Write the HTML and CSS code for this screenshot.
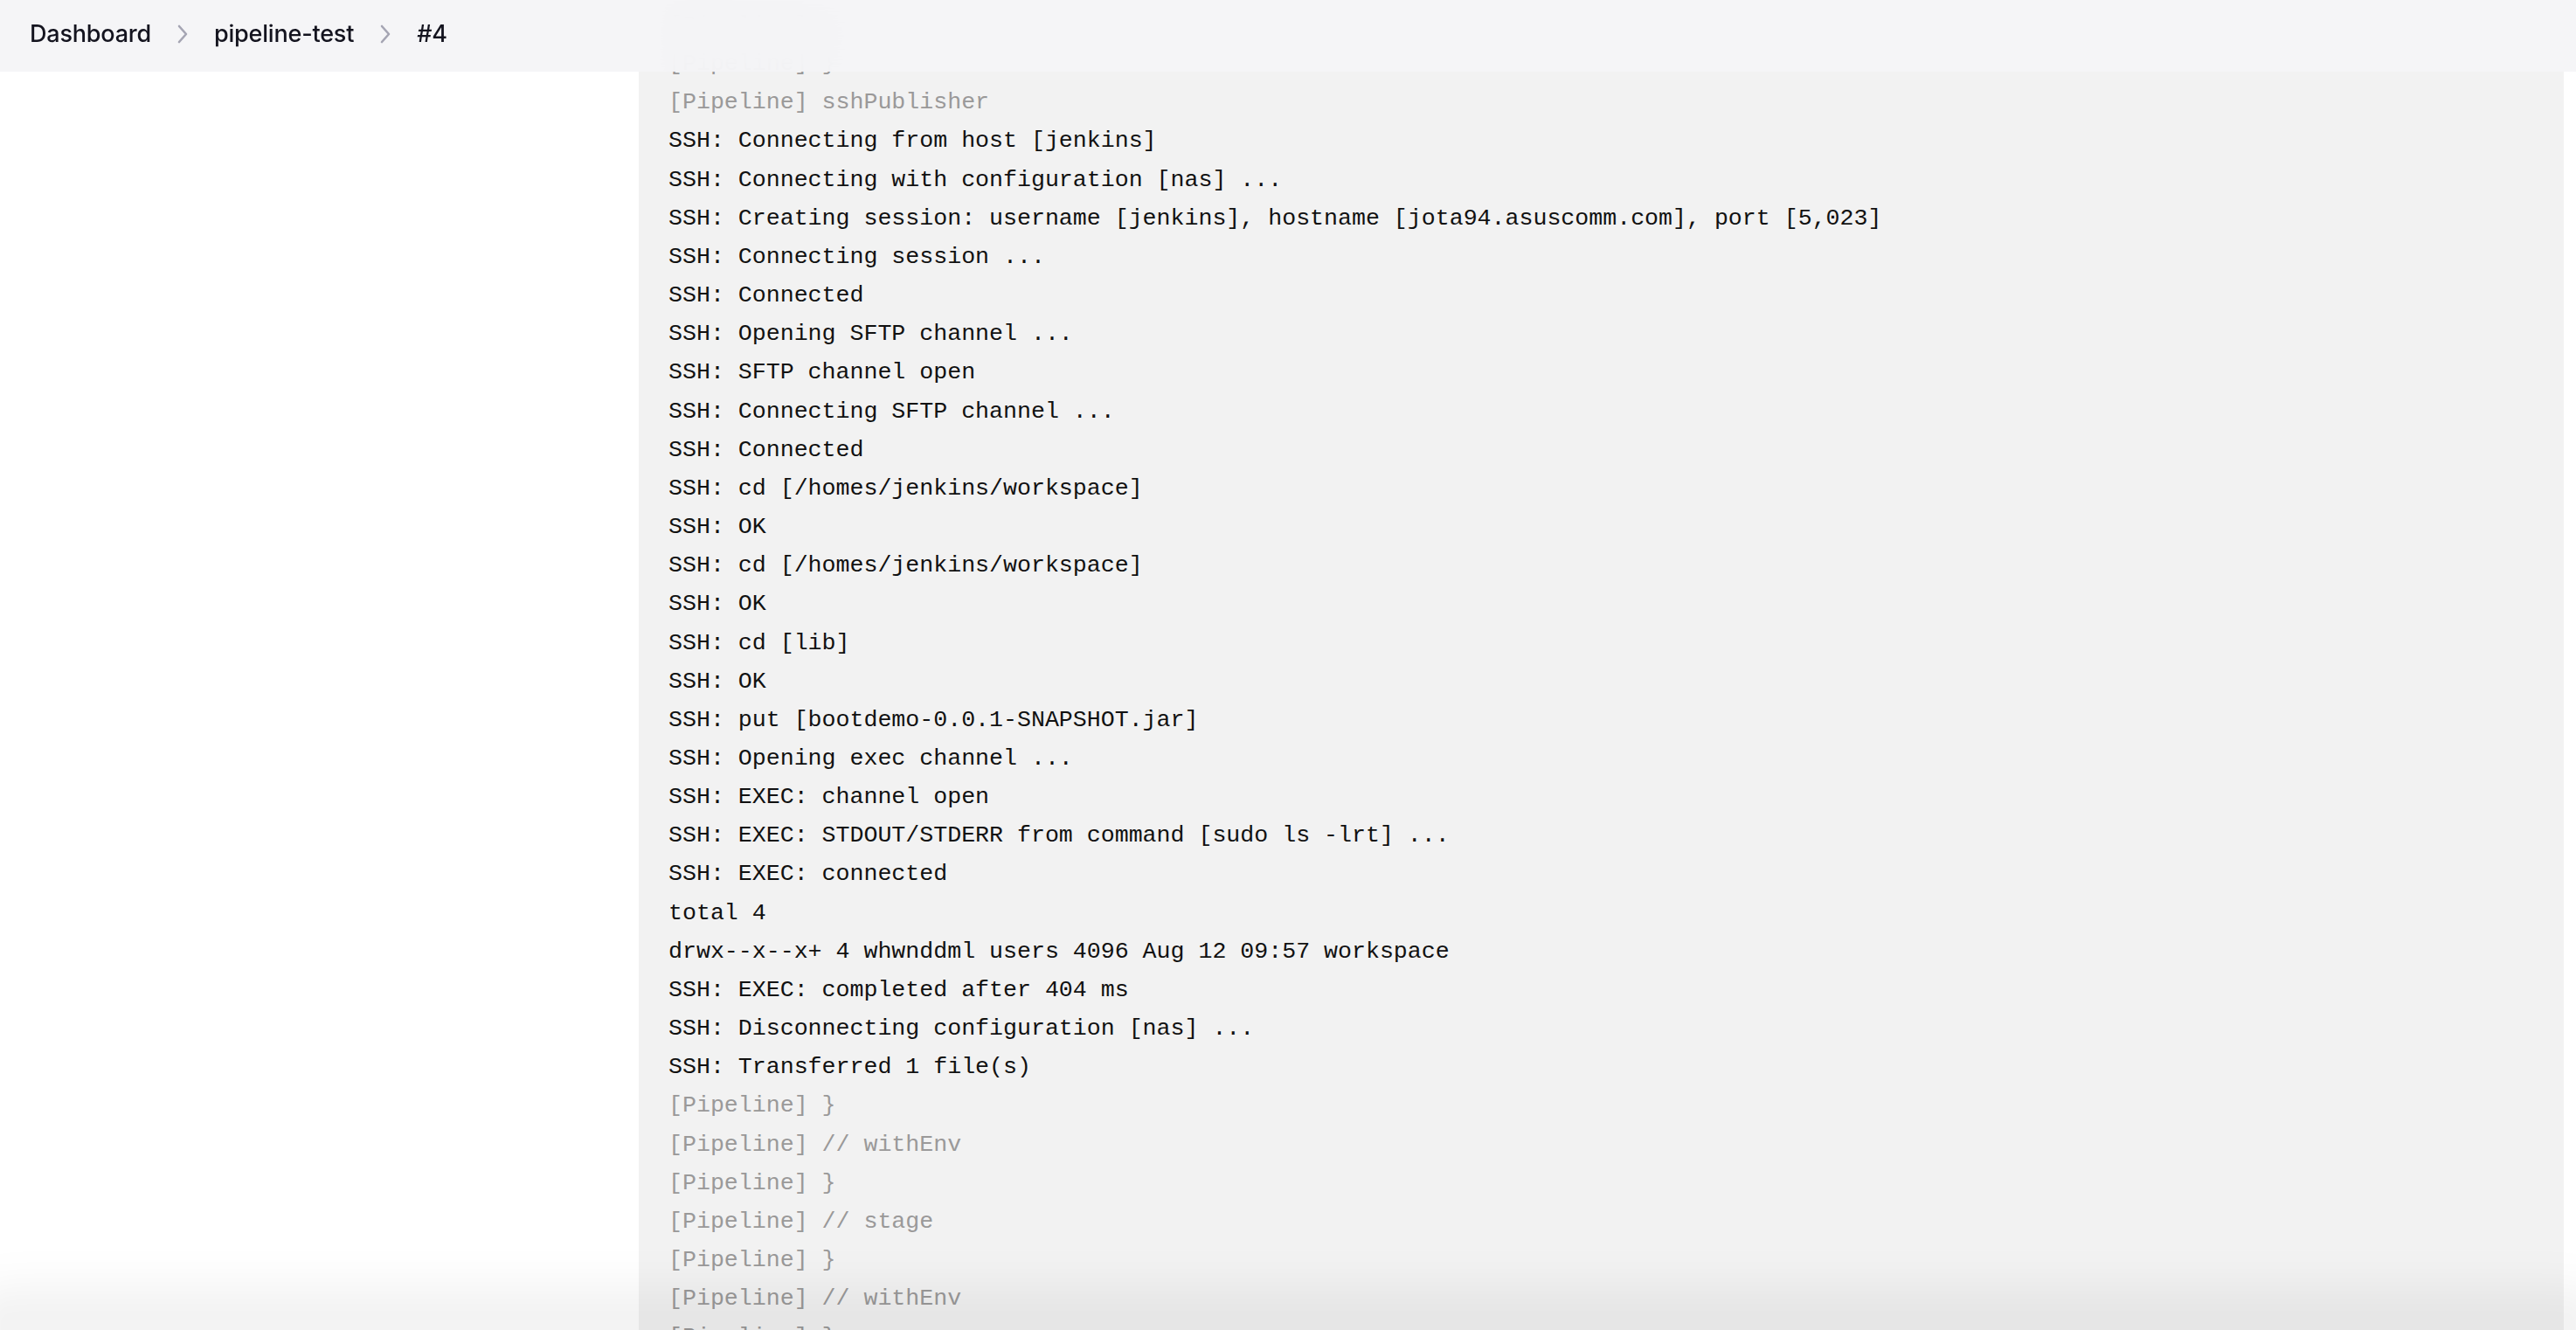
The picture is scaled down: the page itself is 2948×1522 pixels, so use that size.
FILE: index.html
```html
<!DOCTYPE html>
<html lang="en">
<head>
<meta charset="utf-8">
<title>pipeline-test #4 Console</title>
<link rel="stylesheet" href="styles.css">
</head>
<body>
<header class="page-header">
  <nav class="breadcrumbs">
    <a class="crumb" href="#">Dashboard</a>
    <svg class="chevron" viewBox="0 0 12 22" width="12" height="22"><path d="M2 2 L10 11 L2 20" fill="none" stroke="#a5a5b3" stroke-width="2.6" stroke-linecap="round" stroke-linejoin="round"/></svg>
    <a class="crumb" href="#">pipeline-test</a>
    <svg class="chevron" viewBox="0 0 12 22" width="12" height="22"><path d="M2 2 L10 11 L2 20" fill="none" stroke="#a5a5b3" stroke-width="2.6" stroke-linecap="round" stroke-linejoin="round"/></svg>
    <a class="crumb" href="#">#4</a>
  </nav>
</header>
<div class="page">
  <aside class="sidebar"></aside>
  <main class="console">
<pre class="console-output"><span class="pl">[Pipeline] {</span>
<span class="pl">[Pipeline] }</span>
<span class="pl">[Pipeline] sshPublisher</span>
SSH: Connecting from host [jenkins]
SSH: Connecting with configuration [nas] ...
SSH: Creating session: username [jenkins], hostname [jota94.asuscomm.com], port [5,023]
SSH: Connecting session ...
SSH: Connected
SSH: Opening SFTP channel ...
SSH: SFTP channel open
SSH: Connecting SFTP channel ...
SSH: Connected
SSH: cd [/homes/jenkins/workspace]
SSH: OK
SSH: cd [/homes/jenkins/workspace]
SSH: OK
SSH: cd [lib]
SSH: OK
SSH: put [bootdemo-0.0.1-SNAPSHOT.jar]
SSH: Opening exec channel ...
SSH: EXEC: channel open
SSH: EXEC: STDOUT/STDERR from command [sudo ls -lrt] ...
SSH: EXEC: connected
total 4
drwx--x--x+ 4 whwnddml users 4096 Aug 12 09:57 workspace
SSH: EXEC: completed after 404 ms
SSH: Disconnecting configuration [nas] ...
SSH: Transferred 1 file(s)
<span class="pl">[Pipeline] }</span>
<span class="pl">[Pipeline] // withEnv</span>
<span class="pl">[Pipeline] }</span>
<span class="pl">[Pipeline] // stage</span>
<span class="pl">[Pipeline] }</span>
<span class="pl">[Pipeline] // withEnv</span>
<span class="pl">[Pipeline] }</span>
</pre>
  </main>
</div>
<div class="bottom-fade"></div>
</body>
</html>
```

FILE: styles.css
```css
html, body {
  margin: 0;
  padding: 0;
  height: 1522px;
  overflow: hidden;
  background: #ffffff;
}

body {
  font-family: Inter, "Noto Sans", "Liberation Sans", sans-serif;
  color: #14141f;
}

.page-header {
  position: fixed;
  top: 0;
  left: 0;
  right: 0;
  height: 82px;
  z-index: 10;
  background: rgba(244, 244, 246, 0.94);
  backdrop-filter: blur(18px);
  -webkit-backdrop-filter: blur(18px);
  display: flex;
  align-items: center;
  padding-left: 34px;
}

.breadcrumbs {
  display: flex;
  align-items: center;
  gap: 30px;
  margin-top: -5px;
}

.crumb {
  font-size: 27px;
  font-weight: 500;
  color: #14141f;
  text-decoration: none;
  letter-spacing: -0.2px;
}

.chevron {
  display: block;
  flex: none;
}

.page {
  display: flex;
  height: 1522px;
}

.sidebar {
  width: 731px;
  flex: none;
}

.console {
  width: 2203px;
  flex: none;
  background: #f2f2f2;
}

.console-output {
  margin: 0;
  padding: 7px 34px 0 34px;
  font-family: "Liberation Mono", "DejaVu Sans Mono", monospace;
  font-size: 26.6px;
  line-height: 44.15px;
  color: #111111;
  white-space: pre;
}

.pl {
  color: #9a9999;
}

.bottom-fade {
  position: fixed;
  left: -40px;
  right: -40px;
  bottom: -40px;
  height: 90px;
  border-radius: 60px;
  background: rgba(0, 0, 0, 0.05);
  filter: blur(24px);
  z-index: 5;
  pointer-events: none;
}
```
